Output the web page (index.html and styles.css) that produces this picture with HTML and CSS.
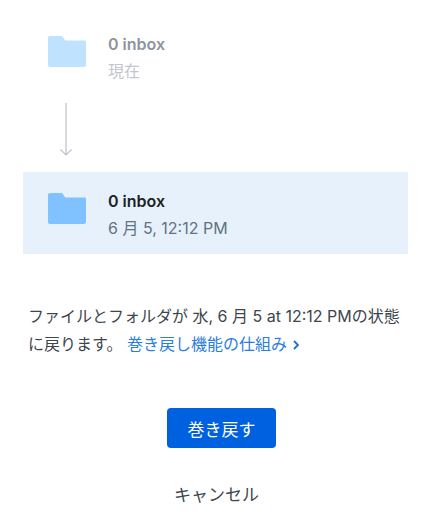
FILE: index.html
```html
<!DOCTYPE html>
<html lang="ja">
<head>
	<meta charset="UTF-8">
	<title>巻き戻す</title>
	<link rel="stylesheet" href="styles.css">
</head>
<body>
	<div class="content">
		<div class="row row_old">
			<svg class="folder" viewBox="0 0 38 31"><path d="M2 0h10.500c1.200 0 2 .5 2.700 1.500l1.300 2c.4.600.9 1 1.700 1H36.500c.9 0 1.500.6 1.500 1.500v23c0 1.200-.8 2-2 2H2c-1.200 0-2-.8-2-2V2C0 .8.800 0 2 0z"/></svg>
			<div class="info">
				<span class="name">0 inbox</span>
				<span class="time">現在</span>
			</div>
		</div>
		<svg class="arrow" viewBox="0 0 16 54"><path d="M8 0v52M2.500 46.500 8 52l5.500-5.500"/></svg>
		<div class="row row_new">
			<svg class="folder" viewBox="0 0 38 31"><path d="M2 0h10.500c1.200 0 2 .5 2.700 1.500l1.300 2c.4.600.9 1 1.700 1H36.500c.9 0 1.500.6 1.500 1.500v23c0 1.200-.8 2-2 2H2c-1.200 0-2-.8-2-2V2C0 .8.800 0 2 0z"/></svg>
			<div class="info">
				<span class="name">0 inbox</span>
				<span class="time">6 月 5, 12:12 PM</span>
			</div>
		</div>
		<p class="desc">ファイルとフォルダが 水, 6 月 5 at 12:12 PMの状態に戻ります。 <a class="more" href="#">巻き戻し機能の仕組み<svg class="chevron" viewBox="0 0 8 10"><path d="M2 1l4 4-4 4"/></svg></a></p>
		<div class="actions">
			<button class="btn btn_rewind">巻き戻す</button>
			<button class="btn btn_cancel">キャンセル</button>
		</div>
	</div>
</body>
</html>
```

FILE: styles.css
```css
body{
	margin: 0;
	padding: 0;
	background-color: #FFF;
	font-family: Inter, "Noto Sans CJK JP", sans-serif;
	color: #1E2124;
}

.content{
	width: 385px;
	margin-left: 23px;
	padding-top: 15px;
}

.row{
	display: flex;
	align-items: flex-start;
	height: 82px;
	padding: 21px 0 0 25px;
	box-sizing: border-box;
}

.row_new{
	background-color: #E6F1FB;
}

.row_old .folder{
	fill: #BFE2FF;
}

.row_new .folder{
	fill: #80C2FF;
}

.folder{
	width: 38px;
	height: 31px;
	flex: none;
}

.info{
	margin-left: 22px;
	margin-top: -3px;
}

.name{
	display: block;
	font-size: 16px;
	font-weight: 600;
	line-height: 22px;
}

.time{
	display: block;
	margin-top: 5px;
	font-size: 16px;
	line-height: 22px;
	color: #637282;
}

.row_old .name{
	color: #8D959E;
}

.row_old .time{
	color: #C1C7CD;
}

.arrow{
	display: block;
	width: 16px;
	height: 54px;
	margin: 6px 0 15px 35px;
	fill: none;
	stroke: #BDC3CC;
	stroke-width: 1.2;
}

.desc{
	margin: 48px 0 0 5px;
	width: 376px;
	font-size: 16px;
	line-height: 28px;
	color: #3D464D;
}

.more{
	color: #2A7DE1;
	text-decoration: none;
}

.chevron{
	width: 8px;
	height: 10px;
	margin-left: 5px;
	fill: none;
	stroke: #1A6FDB;
	stroke-width: 1.8;
}

.actions{
	display: flex;
	flex-direction: column;
	align-items: center;
	margin-top: 50px;
	margin-left: 12px;
}

.btn{
	border: none;
	padding: 0;
	font-family: inherit;
	font-size: 17px;
}

.btn_rewind{
	width: 109px;
	height: 40px;
	border-radius: 4px;
	background-color: #0061E0;
	color: #FFF;
}

.btn_cancel{
	margin-top: 36px;
	margin-right: 10px;
	background: none;
	line-height: 22px;
	color: #3D464D;
}
```
